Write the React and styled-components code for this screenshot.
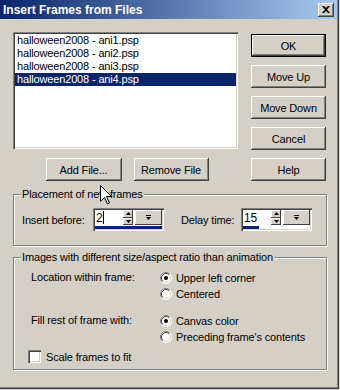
import styled, { createGlobalStyle } from "styled-components";

const GlobalStyle = createGlobalStyle`
  html, body { margin: 0; padding: 0; }
  body {
    font-family: "Liberation Sans", Arial, sans-serif;
    font-size: 11px;
    letter-spacing: -0.15px;
    color: #000;
  }
`;

const Window = styled.div`
  position: relative;
  width: 340px;
  height: 390px;
  box-sizing: border-box;
  background: #d4d0c8;
  box-shadow: inset -1px -1px #d4d0c8, inset -2px -2px #404040, inset -3px -3px #808080;
  overflow: hidden;
`;

const TitleBar = styled.div`
  height: 19px;
  margin-right: 3px;
  padding: 0 3px 0 3px;
  display: flex;
  align-items: center;
  justify-content: space-between;
  background: linear-gradient(to right, #0a246a, #a6caf0);
  color: #fff;
  font-weight: bold;
  font-size: 12px;
  letter-spacing: 0;
`;

const CloseButton = styled.div`
  width: 16px;
  height: 14px;
  box-sizing: border-box;
  background: #d4d0c8;
  box-shadow: inset -1px -1px #404040, inset 1px 1px #fff, inset -2px -2px #808080;
  display: flex;
  align-items: center;
  justify-content: center;
`;

const Body = styled.div`
  padding: 13px 13px 0 13px;
`;

const TopRow = styled.div`
  display: flex;
  gap: 13px;
`;

const ListColumn = styled.div`
  width: 225px;
  display: flex;
  flex-direction: column;
  gap: 9px;
`;

const ListBox = styled.div`
  height: 117px;
  box-sizing: border-box;
  background: #fff;
  padding: 2px;
  box-shadow: inset 1px 1px #808080, inset 2px 2px #404040, inset -1px -1px #fff, inset -2px -2px #d4d0c8;
`;

const ListItem = styled.div`
  height: 13px;
  line-height: 13px;
  padding-left: 2px;
  white-space: nowrap;
  background: ${(p) => (p.$selected ? "#0a246a" : "transparent")};
  color: ${(p) => (p.$selected ? "#fff" : "#000")};
`;

const ListButtons = styled.div`
  display: flex;
  justify-content: center;
  gap: 12px;
  padding-left: 3px;
`;

const ButtonColumn = styled.div`
  width: 75px;
  margin-top: 2px;
  display: flex;
  flex-direction: column;
  gap: 8px;
`;

const Button = styled.div`
  width: ${(p) => p.$w || 75}px;
  height: 23px;
  box-sizing: border-box;
  display: flex;
  align-items: center;
  justify-content: center;
  background: #d4d0c8;
  border: ${(p) => (p.$default ? "1px solid #000" : "none")};
  box-shadow: inset -1px -1px #404040, inset 1px 1px #fff, inset -2px -2px #808080;
`;

const Group = styled.fieldset`
  margin: ${(p) => p.$top}px 0 0 0;
  padding: ${(p) => p.$pad};
  border: 1px solid #808080;
  box-shadow: inset 1px 1px #fff, 1px 1px #fff;
  min-inline-size: 0;
`;

const Legend = styled.legend`
  margin-left: -1px;
  padding: 0 1px;
  line-height: 13px;
  background: #d4d0c8;
`;

const FieldRow = styled.div`
  display: flex;
  align-items: center;
`;

const FieldLabel = styled.div`
  width: ${(p) => p.$w}px;
  margin-left: ${(p) => p.$ml || 0}px;
`;

const SpinBox = styled.div`
  width: 71px;
  height: 23px;
  box-sizing: border-box;
  padding: 2px;
  background: #fff;
  box-shadow: inset 1px 1px #808080, inset 2px 2px #404040, inset -1px -1px #fff, inset -2px -2px #d4d0c8;
  display: flex;
  flex-direction: column;
`;

const SpinTop = styled.div`
  flex: 1;
  display: flex;
  align-items: stretch;
`;

const SpinText = styled.div`
  flex: 1;
  padding-left: 1px;
  display: flex;
  align-items: center;
  font-size: 12px;
`;

const Caret = styled.span`
  display: inline-block;
  width: 1px;
  height: 13px;
  background: #000;
`;

const SpinArrows = styled.div`
  width: 10px;
  display: flex;
  flex-direction: column;
`;

const SmallBtn = styled.div`
  flex: 1;
  width: ${(p) => p.$w || 10}px;
  margin-left: ${(p) => p.$ml || 0}px;
  box-sizing: border-box;
  display: flex;
  align-items: center;
  justify-content: center;
  background: #d4d0c8;
  box-shadow: inset -1px -1px #404040, inset 1px 1px #fff;
`;

const Bar = styled.div`
  height: 3px;
  margin-top: 1px;
`;

const BarFill = styled.div`
  height: 3px;
  background: #0a246a;
`;

const Inner = styled.div`
  padding-left: 9px;
`;

const Section = styled.div`
  display: flex;
  margin-top: ${(p) => p.$top}px;
`;

const SectionLabel = styled.div`
  width: 129px;
  height: 15px;
  line-height: 15px;
`;

const OptionList = styled.div`
  display: flex;
  flex-direction: column;
  gap: 1px;
`;

const Option = styled.div`
  height: 15px;
  display: flex;
  align-items: center;
  gap: ${(p) => p.$gap || 4}px;
  margin-left: ${(p) => p.$ml || 0}px;
  margin-top: ${(p) => p.$top || 0}px;
`;

const CheckBox = styled.div`
  width: 13px;
  height: 13px;
  box-sizing: border-box;
  background: #fff;
  box-shadow: inset 1px 1px #808080, inset 2px 2px #404040, inset -1px -1px #fff, inset -2px -2px #d4d0c8;
`;

const Cursor = styled.svg`
  position: absolute;
  left: 100px;
  top: 185px;
`;

const Radio = ({ checked }) => (
  <svg width="12" height="12" viewBox="0 0 12 12">
    <circle cx="6" cy="6" r="5.5" fill="#fff" />
    <path d="M2.11 9.89 A5.5 5.5 0 0 1 9.89 2.11" fill="none" stroke="#808080" />
    <path d="M9.89 2.11 A5.5 5.5 0 0 1 2.11 9.89" fill="none" stroke="#fff" />
    <path d="M2.82 9.18 A4.5 4.5 0 0 1 9.18 2.82" fill="none" stroke="#404040" />
    <path d="M9.18 2.82 A4.5 4.5 0 0 1 2.82 9.18" fill="none" stroke="#d4d0c8" />
    {checked && <circle cx="6" cy="6" r="2" fill="#000" />}
  </svg>
);

const Up = () => (
  <svg width="5" height="3" viewBox="0 0 5 3">
    <path d="M2.5 0 L5 3 L0 3 Z" fill="#000" />
  </svg>
);

const Down = () => (
  <svg width="5" height="3" viewBox="0 0 5 3">
    <path d="M0 0 L5 0 L2.5 3 Z" fill="#000" />
  </svg>
);

const Drop = () => (
  <svg width="5" height="6" viewBox="0 0 5 6">
    <rect x="0" y="0" width="5" height="1" fill="#000" />
    <path d="M0 2 L5 2 L2.5 5 Z" fill="#000" />
  </svg>
);

const Spin = ({ value, caret, fill }) => (
  <SpinBox>
    <SpinTop>
      <SpinText>
        {value}
        {caret && <Caret />}
      </SpinText>
      <SpinArrows>
        <SmallBtn><Up /></SmallBtn>
        <SmallBtn><Down /></SmallBtn>
      </SpinArrows>
      <SmallBtn $ml={2} $w={10}><Drop /></SmallBtn>
    </SpinTop>
    <Bar>
      <BarFill style={{ width: fill }} />
    </Bar>
  </SpinBox>
);

const files = [
  "halloween2008 - ani1.psp",
  "halloween2008 - ani2.psp",
  "halloween2008 - ani3.psp",
  "halloween2008 - ani4.psp",
];

export default function App() {
  return (
    <Window>
      <GlobalStyle />
      <TitleBar>
        <span>Insert Frames from Files</span>
        <CloseButton>
          <svg width="8" height="7" viewBox="0 0 8 7">
            <path d="M0 0h2l2 2 2-2h2L5 3.5 8 7H6L4 5 2 7H0l3-3.5z" fill="#000" />
          </svg>
        </CloseButton>
      </TitleBar>
      <Body>
        <TopRow>
          <ListColumn>
            <ListBox>
              {files.map((f, i) => (
                <ListItem key={f} $selected={i === 3}>{f}</ListItem>
              ))}
            </ListBox>
            <ListButtons>
              <Button $w={76}>Add File...</Button>
              <Button>Remove File</Button>
            </ListButtons>
          </ListColumn>
          <ButtonColumn>
            <Button $default>OK</Button>
            <Button>Move Up</Button>
            <Button>Move Down</Button>
            <Button>Cancel</Button>
            <Button>Help</Button>
          </ButtonColumn>
        </TopRow>

        <Group $top={7} $pad="7px 8px 14px 8px">
          <Legend>Placement of new frames</Legend>
          <FieldRow>
            <FieldLabel $w={71}>Insert before:</FieldLabel>
            <Spin value="2" caret fill="100%" />
            <FieldLabel $w={60} $ml={17}>Delay time:</FieldLabel>
            <Spin value="15" fill="16px" />
          </FieldRow>
        </Group>

        <Group $top={5} $pad="0 8px 5px 8px">
          <Legend>Images with different size/aspect ratio than animation</Legend>
          <Inner>
            <Section $top={6}>
              <SectionLabel>Location within frame:</SectionLabel>
              <OptionList>
                <Option><Radio checked />Upper left corner</Option>
                <Option><Radio />Centered</Option>
              </OptionList>
            </Section>
            <Section $top={12}>
              <SectionLabel>Fill rest of frame with:</SectionLabel>
              <OptionList>
                <Option><Radio checked />Canvas color</Option>
                <Option><Radio />Preceding frame's contents</Option>
              </OptionList>
            </Section>
            <Option $ml={-3} $top={5} $gap={5}>
              <CheckBox />
              Scale frames to fit
            </Option>
          </Inner>
        </Group>
      </Body>
      <Cursor width="12" height="20" viewBox="0 0 12 20">
        <path d="M0.5 0.5 V16.5 L4.5 12.5 L7.5 19 L9.5 18 L6.5 11.5 H11.5 Z" fill="#fff" stroke="#000" />
      </Cursor>
    </Window>
  );
}
